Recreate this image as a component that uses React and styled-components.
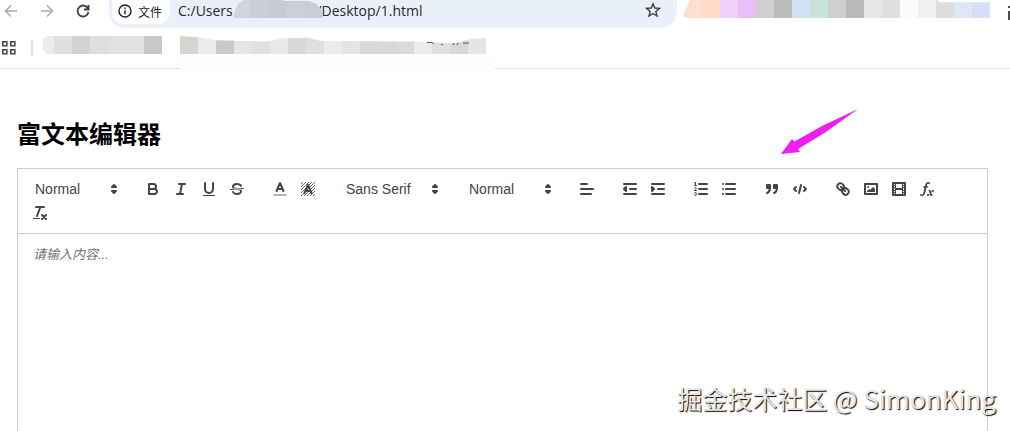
import React from 'react'
import styled, { createGlobalStyle } from 'styled-components'

const GlobalStyle = createGlobalStyle`
* {
box-sizing: border-box;
}
html, body {
margin: 0;
background: #fff;
overflow: hidden;
}
#root {
height: 100vh;
}
`

const Page = styled.div`
position: relative;
height: 100%;
display: flex;
flex-direction: column;
overflow: hidden;
font-family: "Liberation Sans", "Noto Sans CJK SC", sans-serif;
`

const BrowserBar = styled.header`
border-bottom: 1px solid #dfe0e3;
height: 69px;
flex: none;
`

const AddressRow = styled.div`
display: flex;
height: 28px;
`

const NavButtons = styled.div`
display: flex;
width: 109px;
flex: none;
`

const NavButton = styled.button`
width: 36px;
height: 22px;
padding: 0 0 0 3px;
border: 0;
background: none;
color: ${props => props.$dim ? '#a9abae' : '#3c4043'};
text-align: left;
svg {
display: block;
}
`

const AddressField = styled.div`
position: relative;
display: flex;
flex: 0 0 568px;
height: 28px;
padding-left: 3px;
background: #eaf0f9;
border-radius: 0 0 16px 16px;
`

const FileChip = styled.label`
display: flex;
align-items: center;
gap: 6px;
width: 58px;
height: 24px;
padding: 0 0 2px 6px;
border-radius: 0 0 12px 12px;
background: #fff;
color: #1f2023;
font-size: 12px;
white-space: nowrap;
svg {
flex: none;
}
`

const AddressInput = styled.input`
flex: 1;
min-width: 0;
height: 20px;
padding: 0 8px;
border: 0;
outline: 0;
background: none;
color: #27292d;
font-family: "Open Sans", sans-serif;
font-size: 14px;
`

const StarButton = styled.button`
width: 48px;
height: 22px;
padding: 0 16px;
border: 0;
background: none;
color: #3c4043;
`

const MenuButton = styled.button`
width: 20px;
height: 22px;
margin-left: 16px;
padding: 0;
border: 0;
background: none;
color: #4b4c50;
svg {
display: block;
}
`

const Bookmarks = styled.div`
display: flex;
height: 40px;
padding-top: 8px;
`

const AppsButton = styled.button`
box-sizing: content-box;
flex: none;
width: 30px;
height: 16px;
margin-top: 4px;
padding: 0 0 0 1px;
border: 0;
border-right: 2px solid #dbe2f6;
background: none;
color: #47484b;
svg {
display: block;
}
`

const Mosaic = styled.div`
display: flex;
flex: none;
height: 18px;
clip-path: ${props => props.$shape || 'none'};
`

const Cell = styled.span`
width: 18px;
background: ${props => props.$color};
&:first-child {
width: ${props => props.$first}px;
}
`

const UserMask = styled.div`
position: absolute;
left: 124px;
top: 0;
`

const BookmarkMask = styled.div`
position: relative;
margin-left: ${props => props.$gap}px;
`

const Smudge = styled.div`
position: absolute;
top: 18px;
left: 0;
width: 315px;
height: 18px;
border-radius: 0 0 4px 4px;
background: #fdfdfd;
`

const Scraps = styled.svg`
position: absolute;
top: 6px;
left: 246px;
`

const Content = styled.main`
flex: 1;
display: flex;
flex-direction: column;
min-height: 0;
padding: 48px 22px 0 17px;
`

const Title = styled.h2`
margin: 0 0 15px;
font-size: 24px;
line-height: 36px;
font-weight: bold;
color: #000;
`

const Toolbar = styled.div`
display: flex;
flex-wrap: wrap;
flex: none;
padding: 8px;
border: 1px solid #ccc;
`

const Formats = styled.div`
display: flex;
margin-right: 15px;
`

const FormatButton = styled.button`
width: 28px;
height: 24px;
padding: 3px 5px;
border: 0;
background: none;
svg {
display: block;
}
`

const Picker = styled.div`
position: relative;
width: ${props => props.$width}px;
height: 24px;
svg {
position: absolute;
top: 3px;
right: 1px;
pointer-events: none;
}
`

const PickerSelect = styled.select`
appearance: none;
width: 100%;
height: 24px;
padding: 0 8px;
border: 1px solid transparent;
outline: 0;
background: none;
color: #444;
font-family: "Liberation Sans", Arial, sans-serif;
font-size: 14px;
font-weight: 500;
`

const Editor = styled.textarea`
flex: 1;
min-height: 0;
padding: 12px 15px;
border: 1px solid #ccc;
border-width: 0 1px;
outline: 0;
resize: none;
background: none;
font-family: "Liberation Sans", "Noto Sans CJK SC", sans-serif;
font-size: 13px;
line-height: 18px;
&::placeholder {
color: rgba(0, 0, 0, 0.6);
font-style: italic;
}
`

const Arrow = styled.svg`
position: absolute;
left: 780px;
top: 108px;
`

const Watermark = styled.div`
position: absolute;
right: 14px;
bottom: 15px;
color: #e6e6e6;
font-family: "Noto Sans CJK SC", sans-serif;
font-size: 25px;
line-height: 36px;
text-shadow: 1px 1px 1px #000;
white-space: nowrap;
`

const Author = styled.span`
font-size: 26px;
`

const Glyph = styled.svg`
width: 18px;
height: 18px;
.stroke {
fill: none;
stroke: #444;
stroke-linecap: round;
stroke-linejoin: round;
stroke-width: 2;
}
.thin {
stroke-width: 1;
}
.fill {
fill: #444;
}
.solid {
fill: #444;
stroke: #444;
stroke-linecap: round;
stroke-linejoin: round;
stroke-width: 2;
}
`

const icons = {
    bold: <>
        <path className="stroke" d="M5,4H9.5A2.5,2.5,0,0,1,12,6.5v0A2.5,2.5,0,0,1,9.5,9H5V4Z" />
        <path className="stroke" d="M5,9h5.5A2.5,2.5,0,0,1,13,11.5v0A2.5,2.5,0,0,1,10.5,14H5V9Z" />
    </>,
    italic: <path className="stroke" d="M7,4H13M5,14H11M8,14L10,4" />,
    underline: <>
        <path className="stroke" d="M5,3V9a4.012,4.012,0,0,0,4,4H9a4.012,4.012,0,0,0,4-4V3" />
        <rect className="fill" height="1" rx="0.5" width="12" x="3" y="15" />
    </>,
    strike: <>
        <path className="stroke thin" d="M15.5,8.5L2.5,9.5" />
        <path className="fill" d="M9.007,8C6.542,7.791,6,7.519,6,6.5,6,5.792,7.283,5,9,5c1.571,0,2.765.679,2.969,1.309a1,1,0,0,0,1.9-.617C13.356,4.106,11.354,3,9,3,6.2,3,4,4.538,4,6.5a3.2,3.2,0,0,0,.5,1.843Z" />
        <path className="fill" d="M8.984,10C11.457,10.208,12,10.479,12,11.5c0,0.708-1.283,1.5-3,1.5-1.571,0-2.765-.679-2.969-1.309a1,1,0,1,0-1.9.617C4.644,13.894,6.646,15,9,15c2.8,0,5-1.538,5-3.5a3.2,3.2,0,0,0-.5-1.843Z" />
    </>,
    color: <>
        <path className="stroke" opacity="0.4" d="M3,15H15" />
        <path className="stroke" d="M5.5,11L9,3L12.5,11M11.63,9H6.38" />
    </>,
    background: <>
        <defs>
            <pattern id="hatch" width="3" height="3" patternUnits="userSpaceOnUse">
                <path d="M-1,1L1,-1M0,3L3,0M2,4L4,2" stroke="#444" strokeWidth="0.8" />
            </pattern>
        </defs>
        <rect x="2" y="2" width="14" height="14" fill="url(#hatch)" />
        <path className="stroke" d="M5.5,13L9,5L12.5,13M11.63,11H6.38" />
    </>,
    align: <path className="stroke" d="M3,9H15M3,14H13M3,4H9" />,
    outdent: <>
        <path className="stroke" d="M3,14H15M3,4H15M9,9H15" />
        <path className="solid" d="M5,7V11L3,9Z" />
    </>,
    indent: <>
        <path className="stroke" d="M3,14H15M3,4H15M9,9H15" />
        <path className="solid" d="M3,7V11L5,9Z" />
    </>,
    ordered: <>
        <path className="stroke" d="M7,4H15M7,9H15M7,14H15" />
        <path className="stroke thin" d="M2.5,5.5H4.5" />
        <path className="fill" d="M3.5,6A0.5,0.5,0,0,1,3,5.5V3.085l-0.276.138A0.5,0.5,0,0,1,2.053,3c-0.124-.247-0.023-0.324.224-0.447l1-.5A0.5,0.5,0,0,1,4,2.5v3A0.5,0.5,0,0,1,3.5,6Z" />
        <path className="stroke thin" d="M4.5,10.5h-2c0-.234,1.85-1.076,1.85-2.234A0.959,0.959,0,0,0,2.5,8.156" />
        <path className="stroke thin" d="M2.5,14.846a0.959,0.959,0,0,0,1.85-.109A0.7,0.7,0,0,0,3.75,14a0.688,0.688,0,0,0,.6-0.736,0.959,0.959,0,0,0-1.85-.109" />
    </>,
    bullet: <path className="stroke" d="M6,4H15M6,9H15M6,14H15M3,4H3M3,9H3M3,14H3" />,
    quote: <>
        <rect className="solid" height="3" width="3" x="4" y="5" />
        <rect className="solid" height="3" width="3" x="11" y="5" />
        <path className="solid" d="M7,8c0,4.031-3,5-3,5" />
        <path className="solid" d="M14,8c0,4.031-3,5-3,5" />
    </>,
    code: <path className="stroke" d="M5,7L3,9L5,11M13,7L15,9L13,11M10,5L8,13" />,
    link: <>
        <path className="stroke" d="M7,7L11,11" />
        <path className="stroke" d="M8.9,4.577a3.476,3.476,0,0,1,.36,4.679A3.476,3.476,0,0,1,4.577,8.9C3.185,7.5,2.035,6.4,4.217,4.217S7.5,3.185,8.9,4.577Z" />
        <path className="stroke" d="M13.423,9.1a3.476,3.476,0,0,0-4.679-.36,3.476,3.476,0,0,0,.36,4.679c1.392,1.392,2.5,2.542,4.679.36S14.815,10.5,13.423,9.1Z" />
    </>,
    image: <>
        <rect className="stroke" height="10" width="12" x="3" y="4" />
        <circle className="fill" cx="6" cy="7" r="1" />
        <path className="fill" d="M5,12V11L7,9L8,10L11,7L13,9V12Z" />
    </>,
    video: <>
        <rect className="stroke" height="12" width="12" x="3" y="3" />
        <path className="fill" d="M5,3h1v12H5ZM12,3h1v12H12ZM5,8h8v2H5ZM3,5h3v1H3ZM3,7h3v1H3ZM3,10h3v1H3ZM3,12h3v1H3ZM12,5h3v1H12ZM12,7h3v1H12ZM12,10h3v1H12ZM12,12h3v1H12Z" />
    </>,
    formula: <>
        <path className="fill" d="M11.759,2.482a2.561,2.561,0,0,0-3.53.607A7.656,7.656,0,0,0,6.8,6.2C6.109,9.188,5.275,14.677,4.15,14.927a1.545,1.545,0,0,0-1.3-.933A0.922,0.922,0,0,0,2,15.036S1.954,16,4.119,16s3.091-2.691,3.7-5.553c0.177-.826.36-1.726,0.554-2.6L8.775,6.2c0.381-1.421.807-2.521,1.306-2.676a1.014,1.014,0,0,0,1.02.56A0.966,0.966,0,0,0,11.759,2.482Z" />
        <rect className="fill" height="1.6" rx="0.8" width="5" x="5.15" y="6.2" />
        <path className="fill" d="M13.663,12.027a1.662,1.662,0,0,1,.266-0.276q0.193,0.069.456,0.138a2.1,2.1,0,0,0,.535.069,1.075,1.075,0,0,0,.767-0.3,1.044,1.044,0,0,0,.314-0.8,0.84,0.84,0,0,0-.238-0.619,0.8,0.8,0,0,0-.594-0.239,1.154,1.154,0,0,0-.781.3,4.607,4.607,0,0,0-.781,1q-0.091.15-.218,0.346l-0.246.38c-0.068-.288-0.137-0.582-0.212-0.885-0.459-1.847-2.494-.984-2.941-0.8-0.482.2-.353,0.647-0.094,0.529a0.869,0.869,0,0,1,1.281.585c0.217,0.751.377,1.436,0.527,2.038a5.688,5.688,0,0,1-.362.467,2.69,2.69,0,0,1-.264.271q-0.221-.08-0.471-0.147a2.029,2.029,0,0,0-.522-0.066,1.079,1.079,0,0,0-.768.3A1.058,1.058,0,0,0,9,15.131a0.82,0.82,0,0,0,.832.852,1.134,1.134,0,0,0,.787-0.3,5.11,5.11,0,0,0,.776-0.993q0.141-.219.215-0.34c0.046-.076.122-0.194,0.223-0.346a2.786,2.786,0,0,0,.918,1.726,2.582,2.582,0,0,0,2.376-.185c0.317-.181.212-0.565,0-0.494A0.807,0.807,0,0,1,14.176,15a5.159,5.159,0,0,1-.913-2.446l0,0Q13.487,12.24,13.663,12.027Z" />
    </>,
    clean: <>
        <path className="stroke" d="M5,3H13M6,12L9.35,3M11,11L15,15M15,11L11,15" />
        <rect className="fill" height="1" rx="0.5" width="7" x="2" y="14" />
    </>,
    updown: <path className="solid" d="M7,11L9,13L11,11ZM7,7L9,5L11,7Z" />
}

const groups = [
    [{ select: 'Normal', label: 'Header', width: 98 }],
    ['bold', 'italic', 'underline', 'strike'],
    ['color', 'background'],
    [{ select: 'Sans Serif', label: 'Font', width: 108 }],
    [{ select: 'Normal', label: 'Size', width: 98 }],
    ['align'],
    ['outdent', 'indent'],
    ['ordered', 'bullet'],
    ['quote', 'code'],
    ['link', 'image', 'video', 'formula'],
    ['clean']
]

const userCells = ['#cfd4dd', '#c9ced7', '#c5cad3', '#cbd0d8', '#c8cdd6']
const firstCells = ['#ececec', '#e0e0e0', '#d4d3d2', '#dfdedd', '#e1e1e1', '#e1e1e1', '#c8c8c8']
const secondCells = [
    '#d5d5d2', '#ebebeb', '#c9c9c7', '#e6e6e6', '#e0e0e0', '#e8e8e8', '#d8d8d8', '#dfdfdf', '#ebebeb',
    '#e4e4e4', '#d9d9d9', '#d8d8d8', '#dadada', '#ececec', '#e0e0e0', '#d8d8d8', '#e5e5e5'
]
const extensionCells = [
    '#fcdfcf', '#ffdac6', '#efd0f8', '#e9befa', '#cfcfcf', '#bcbcbc', '#d3dff4', '#c8e2dc', '#cfcfcf',
    '#b9b9b9', '#e7e7e7', '#dfdfdf', '#fafcfc', '#f1f1f1', '#dddddd', '#dfe6f7', '#d3e0f6'
]

const userShape = 'polygon(0 100%, 2% 60%, 6% 20%, 12% 0, 54% 0, 58% 6%, 84% 6%, 92% 20%, 98% 50%, 100% 100%)'
const firstShape = 'polygon(0 20%, 3% 0, 100% 0, 100% 100%, 4% 100%, 0 80%)'
const secondShape = 'polygon(0 0, 5% 6%, 12% 24%, 28% 30%, 34% 12%, 42% 10%, 46% 28%, 77% 30%, 90% 40%, 95% 16%, 100% 10%, 100% 100%, 0 100%)'
const extensionShape = 'polygon(0 70%, 2% 0, 83% 0, 83% 12%, 100% 12%, 100% 100%, 1% 100%, 0 90%)'

function Icon({ name }) {
    return <Glyph viewBox="0 0 18 18" aria-hidden="true">{icons[name]}</Glyph>
}

function Blocks({ colors, shape, first = 18 }) {
    return (
        <Mosaic $shape={shape}>
            {colors.map((color, i) => <Cell key={i} $color={color} $first={first} />)}
        </Mosaic>
    )
}

function ToolbarItem({ item }) {
    if (item.select) {
        return (
            <Picker $width={item.width}>
                <PickerSelect aria-label={item.label}>
                    <option>{item.select}</option>
                </PickerSelect>
                <Icon name="updown" />
            </Picker>
        )
    }
    return <FormatButton type="button" aria-label={item}><Icon name={item} /></FormatButton>
}

function Browser() {
    return (
        <BrowserBar>
            <AddressRow>
                <NavButtons>
                    <NavButton aria-label="Back" $dim>
                        <svg width="16" height="16" viewBox="0 0 16 16" fill="none" stroke="currentColor" strokeWidth="1.6"><path d="M14,8H3M8,2.5L2.5,8L8,13.5" /></svg>
                    </NavButton>
                    <NavButton aria-label="Forward" $dim>
                        <svg width="16" height="16" viewBox="0 0 16 16" fill="none" stroke="currentColor" strokeWidth="1.6"><path d="M2,8H13M8,2.5L13.5,8L8,13.5" /></svg>
                    </NavButton>
                    <NavButton aria-label="Reload">
                        <svg width="16" height="16" viewBox="0 0 16 16" fill="none" stroke="currentColor" strokeWidth="1.8"><path d="M13,5.5A5.5,5.5,0,1,0,13.5,9M13.5,2V6.5H9" /></svg>
                    </NavButton>
                </NavButtons>
                <AddressField>
                    <FileChip htmlFor="address">
                        <svg width="14" height="14" viewBox="0 0 14 14" fill="none" stroke="currentColor" strokeWidth="1.4"><circle cx="7" cy="7" r="6" /><path d="M7,6.2V10.3M7,3.6V5" /></svg>
                        文件
                    </FileChip>
                    <AddressInput id="address" defaultValue={'C:/Users' + '\u00a0'.repeat(23) + '/Desktop/1.html'} />
                    <StarButton aria-label="Bookmark">
                        <svg width="16" height="16" viewBox="0 0 16 16" fill="none" stroke="currentColor" strokeWidth="1.4"><path d="M8,1.8L9.8,6L14.4,6.4L10.9,9.4L12,14L8,11.5L4,14L5.1,9.4L1.6,6.4L6.2,6Z" /></svg>
                    </StarButton>
                    <UserMask>
                        <Blocks colors={userCells} shape={userShape} />
                    </UserMask>
                </AddressField>
                <BookmarkMask $gap={7}>
                    <Blocks colors={extensionCells} shape={extensionShape} />
                </BookmarkMask>
                <MenuButton aria-label="Menu">
                    <svg width="16" height="18" viewBox="0 0 16 18" fill="currentColor"><path d="M2,4H14V6H2ZM2,9H14V18H2Z" /></svg>
                </MenuButton>
            </AddressRow>
            <Bookmarks>
                <AppsButton aria-label="Apps">
                    <svg width="16" height="16" viewBox="0 0 16 16" fill="none" stroke="currentColor" strokeWidth="1.6"><path d="M1.8,1.8h4v4h-4ZM9.8,1.8h4v4h-4ZM1.8,9.8h4v4h-4ZM9.8,9.8h4v4h-4Z" /></svg>
                </AppsButton>
                <BookmarkMask $gap={10}>
                    <Blocks colors={firstCells} shape={firstShape} first={11} />
                </BookmarkMask>
                <BookmarkMask $gap={18}>
                    <Blocks colors={secondCells} shape={secondShape} />
                    <Smudge />
                    <Scraps width="44" height="4" viewBox="0 0 44 4" fill="none" stroke="#555" aria-hidden="true">
                        <path d="M1,0.5H6L8,2M15,2.5H17M27,3L28,1M31,3L32,1M37,1H43" />
                    </Scraps>
                </BookmarkMask>
            </Bookmarks>
        </BrowserBar>
    )
}

function App() {

    return (
        <Page>
            <GlobalStyle />
            <Browser />
            <Content>
                <Title>富文本编辑器</Title>
                <Toolbar>
                    {groups.map((group, i) => (
                        <Formats key={i}>
                            {group.map((item, j) => <ToolbarItem key={j} item={item} />)}
                        </Formats>
                    ))}
                </Toolbar>
                <Editor aria-label="富文本编辑器" placeholder="请输入内容..." />
            </Content>
            <Arrow width="80" height="48" viewBox="0 0 80 48" aria-hidden="true">
                <path fill="#f01cf0" d="M1,46L12,31L14.5,33.5L42,18L78,1L46,24L18,41L20,44Z" />
            </Arrow>
            <Watermark>掘金技术社区 <Author>@ SimonKing</Author></Watermark>
        </Page>
    )

}

export default App
